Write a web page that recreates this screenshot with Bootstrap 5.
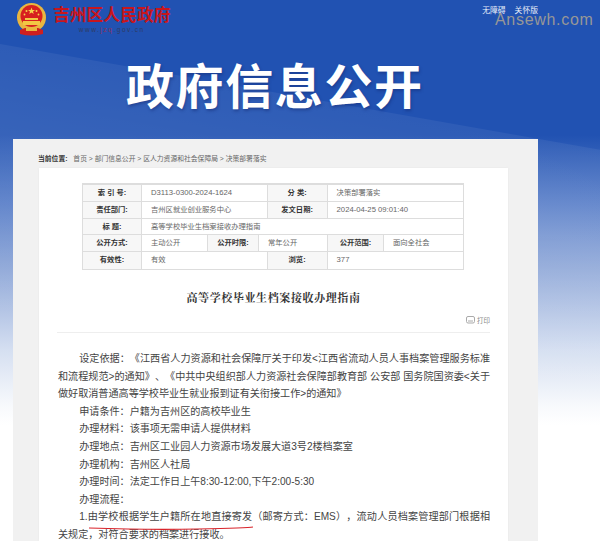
<!DOCTYPE html>
<html lang="zh-CN">

<head>
    <meta charset="UTF-8">
    <meta name="viewport" content="width=device-width, initial-scale=1.0">
    <title>高等学校毕业生档案接收办理指南</title>
    <link href="https://cdn.jsdelivr.net/npm/bootstrap@5.3.0/dist/css/bootstrap.min.css" rel="stylesheet">
    <style>
        html, body { height: 541px; overflow: hidden; }
        body {
            font-family: "Liberation Sans", "Noto Sans CJK SC", sans-serif;
            background:
                linear-gradient(190deg, transparent 147px, rgba(255, 255, 255, .06) 148px, rgba(255, 255, 255, .1) 240px, transparent 420px),
                linear-gradient(180deg, #2152b2 0, #2152b2 135px, #5b80c9 205px, #92aad9 270px, #d5dff1 350px, #f7f9fc 405px, #fff 425px);
            color: #444;
        }
        .top-head { height: 139px; padding: 3px 0 0 16px; }
        .emblem { width: 31px; height: 33px; margin-right: 6px; flex: none; }
        .site-name { color: #c8161d; font-size: 16.8px; font-weight: 700; line-height: 20px; margin-top: 3px; white-space: nowrap; }
        .site-url { color: #2f3b63; font-size: 6.5px; letter-spacing: 1.55px; line-height: 8px; text-align: center; }
        .site-url em { color: #8f2f58; font-style: normal; }
        .top-links { color: #e8eefa; font-size: 7.8px; gap: 9px; margin: 2px 0 0 auto; padding-right: 62px; line-height: 11px; }
        .big-title { color: #fff; font-size: 48px; font-weight: 700; letter-spacing: 1.6px; line-height: 56px; margin: 24px 0 0 110px; text-shadow: 1px 2px 3px rgba(20, 40, 110, .45); white-space: nowrap; }
        .watermark { position: absolute; left: 495px; top: 9px; color: #979797; font-size: 16px; letter-spacing: .7px; line-height: 22px; }
        .gray-panel { background: #f1f1f1; width: 525px; margin-left: 13px; height: 402px; padding: 0 30px 0 26px; }
        .crumbs { font-size: 6.8px; color: #666; height: 29px; padding-top: 14px; line-height: 11px; margin-left: -1px; white-space: nowrap; }
        .crumbs b { color: #333; margin-right: 4px; }
        .white-box { background: #fff; height: 373px; padding: 15px 18px 0 18px; box-shadow: 0 0 2px #e6e6e6; }
        .meta-grid { width: 382px; margin-left: 25px; border: 1px solid #ddd; border-top-width: 2px; font-size: 7.3px; color: #666; }
        .meta-row { display: flex; height: 16.8px; border-bottom: 1px solid #ddd; line-height: 15.6px; }
        .meta-row:last-child { border-bottom: 0; }
        .cell-label { background: #f7f7f7; color: #333; font-weight: 700; text-align: center; flex: none; border-right: 1px solid #ddd; }
        .cell-val { padding-left: 9px; flex: none; border-right: 1px solid #ddd; white-space: nowrap; }
        .cell-val:last-child { border-right: 0; flex: 1; }
        .num-val { font-size: 7.7px; }
        .w-head { width: 59px; }
        .w-wide { width: 125.6px; }
        .w-mid { width: 60px; }
        .w-pub { width: 66px; }
        .w-lim { width: 51px; }
        .w-year { width: 69px; }
        .w-scope { width: 56px; }
        .doc-title { font-family: "Liberation Serif", "Noto Serif CJK SC", "Noto Sans CJK SC", serif; font-size: 11px; font-weight: 700; color: #333; text-align: center; letter-spacing: .6px; line-height: 16px; margin-top: 20px; }
        .print-bar { height: 17px; margin-top: 10px; border-bottom: 1px solid #eee; font-size: 6.5px; color: #888; align-items: flex-start; justify-content: flex-end; gap: 2px; line-height: 9px; }
        .doc-body { font-size: 10.1px; line-height: 17.6px; color: #444; margin-top: 17px; padding-left: 1px; text-align: justify; text-spacing-trim: space-all; }
        .doc-body p { margin: 0; text-indent: 2.1em; }
        .red-mark { position: relative; white-space: nowrap; }
        .red-line { position: absolute; left: 0; top: 13.5px; width: 166px; height: 6px; overflow: visible; }
    </style>
</head>

<body>
    <div class="position-relative">
        <div class="top-head">
            <div class="d-flex">
                <svg class="emblem" viewBox="0 0 31 33">
                    <circle cx="15.5" cy="14.5" r="14.5" fill="#e9b640"/>
                    <circle cx="15.5" cy="13" r="11" fill="#d7201f"/>
                    <polygon points="15.5,4.5 16.4,7 19,7 17,8.6 17.7,11 15.5,9.6 13.3,11 14,8.6 12,7 14.6,7" fill="#f5d34a"/>
                    <circle cx="10.5" cy="8" r="1" fill="#f5d34a"/>
                    <circle cx="20.5" cy="8" r="1" fill="#f5d34a"/>
                    <circle cx="8.5" cy="11.5" r=".9" fill="#f5d34a"/>
                    <circle cx="22.5" cy="11.5" r=".9" fill="#f5d34a"/>
                    <rect x="9" y="15" width="13" height="2" fill="#f2c744"/>
                    <rect x="7" y="18" width="17" height="4" fill="#f2c744"/>
                    <path d="M4 27 L9 25 H22 L27 27 V31 Q15.5 34 4 31 Z" fill="#cf1f1f"/>
                    <rect x="10" y="25" width="11" height="3" fill="#e9b640"/>
                </svg>
                <div>
                    <div class="site-name">吉州区人民政府</div>
                    <div class="site-url">www.<em>jzq</em>.gov.cn</div>
                </div>
                <div class="d-flex top-links"><span>无障碍</span><span>关怀版</span></div>
            </div>
            <div class="big-title">政府信息公开</div>
        </div>
        <div class="watermark">Ansewh.com</div>
        <div class="gray-panel">
            <div class="crumbs"><b>当前位置:</b> 首页 &gt; 部门信息公开 &gt; 区人力资源和社会保障局 &gt; 决策部署落实</div>
            <div class="white-box">
                <div class="meta-grid">
                    <div class="meta-row">
                        <div class="cell-label w-head">索 引 号:</div>
                        <div class="cell-val w-wide num-val">D3113-0300-2024-1624</div>
                        <div class="cell-label w-mid">分 类:</div>
                        <div class="cell-val">决策部署落实</div>
                    </div>
                    <div class="meta-row">
                        <div class="cell-label w-head">责任部门:</div>
                        <div class="cell-val w-wide">吉州区就业创业服务中心</div>
                        <div class="cell-label w-mid">发文日期:</div>
                        <div class="cell-val num-val">2024-04-25 09:01:40</div>
                    </div>
                    <div class="meta-row">
                        <div class="cell-label w-head">标 题:</div>
                        <div class="cell-val">高等学校毕业生档案接收办理指南</div>
                    </div>
                    <div class="meta-row">
                        <div class="cell-label w-head">公开方式:</div>
                        <div class="cell-val w-pub">主动公开</div>
                        <div class="cell-label w-lim">公开时限:</div>
                        <div class="cell-val w-year">常年公开</div>
                        <div class="cell-label w-scope">公开范围:</div>
                        <div class="cell-val">面向全社会</div>
                    </div>
                    <div class="meta-row">
                        <div class="cell-label w-head">有效性:</div>
                        <div class="cell-val w-wide">有效</div>
                        <div class="cell-label w-mid">浏览:</div>
                        <div class="cell-val num-val">377</div>
                    </div>
                </div>
                <div class="doc-title">高等学校毕业生档案接收办理指南</div>
                <div class="d-flex print-bar">
                    <svg width="9" height="8" viewBox="0 0 9 8" fill="none" stroke="#aaa"><rect x=".5" y=".5" width="8" height="6.5" rx="1.5"/><path d="M2 5h5"/></svg>
                    <span>打印</span>
                </div>
                <div class="doc-body">
                    <p>设定依据&#xFF1A;《江西省人力资源和社会保障厅关于印发&lt;江西省流动人员人事档案管理服务标准和流程规范&gt;的通知》、《中共中央组织部人力资源社会保障部教育部 公安部 国务院国资委&lt;关于做好取消普通高等学校毕业生就业报到证有关衔接工作&gt;的通知》</p>
                    <p>申请条件&#xFF1A;户籍为吉州区的高校毕业生</p>
                    <p>办理材料&#xFF1A;该事项无需申请人提供材料</p>
                    <p>办理地点&#xFF1A;吉州区工业园人力资源市场发展大道3号2楼档案室</p>
                    <p>办理机构&#xFF1A;吉州区人社局</p>
                    <p>办理时间&#xFF1A;法定工作日上午8:30-12:00,下午2:00-5:30</p>
                    <p>办理流程&#xFF1A;</p>
                    <p>1.<span class="red-mark">由学校根据学生户籍所在地直接寄发<svg class="red-line" viewBox="0 0 166 6" fill="none"><path d="M1 3 Q60 5 110 4 T165 2" stroke="#d8232a" stroke-width="1.2"/></svg></span>&#xFF08;邮寄方式&#xFF1A;EMS&#xFF09;&#xFF0C;流动人员档案管理部门根据相关规定&#xFF0C;对符合要求的档案进行接收。</p>
                </div>
            </div>
        </div>
    </div>

    <script src="https://cdn.jsdelivr.net/npm/bootstrap@5.3.0/dist/js/bootstrap.bundle.min.js"></script>
</body>

</html>
